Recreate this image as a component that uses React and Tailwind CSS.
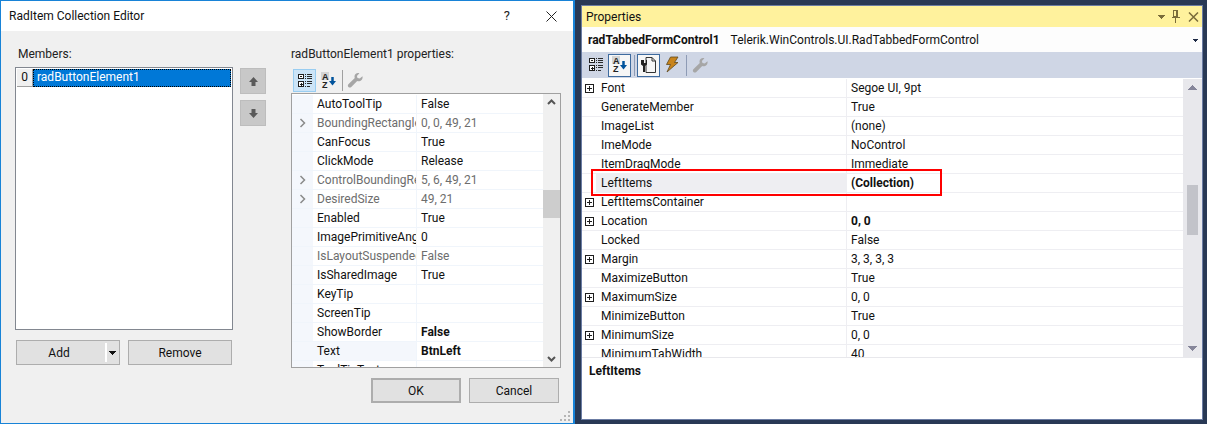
import React from "react";

const F = { fontFamily: 'Roboto, "Noto Sans", sans-serif' };

const leftRows = [
  ["AutoToolTip", "False"],
  ["BoundingRectangle", "0, 0, 49, 21", "d"],
  ["CanFocus", "True"],
  ["ClickMode", "Release"],
  ["ControlBoundingRectangle", "5, 6, 49, 21", "d"],
  ["DesiredSize", "49, 21", "d"],
  ["Enabled", "True"],
  ["ImagePrimitiveAngleTransform", "0"],
  ["IsLayoutSuspended", "False", "g"],
  ["IsSharedImage", "True"],
  ["KeyTip", ""],
  ["ScreenTip", ""],
  ["ShowBorder", "False", "b"],
  ["Text", "BtnLeft", "s"],
  ["ToolTipText", ""],
];

const rightRows = [
  ["Font", "Segoe UI, 9pt", "e"],
  ["GenerateMember", "True"],
  ["ImageList", "(none)"],
  ["ImeMode", "NoControl"],
  ["ItemDragMode", "Immediate"],
  ["LeftItems", "(Collection)", "sb"],
  ["LeftItemsContainer", "", "e"],
  ["Location", "0, 0", "eb"],
  ["Locked", "False"],
  ["Margin", "3, 3, 3, 3", "e"],
  ["MaximizeButton", "True"],
  ["MaximumSize", "0, 0", "e"],
  ["MinimizeButton", "True"],
  ["MinimumSize", "0, 0", "e"],
  ["MinimumTabWidth", "40"],
];

function CatIcon() {
  const c = "#1e1e1e";
  return (
    <svg width="16" height="16" viewBox="0 0 16 16" shapeRendering="crispEdges">
      <rect x="1.500" y="1.500" width="5" height="4" fill="#fff" stroke={c} />
      <rect x="1.500" y="8.500" width="5" height="5" fill="#fff" stroke={c} />
      <path d="M3 3.500h2M3 11h3M4.500 9.500v3" stroke={c} />
      <path d="M8 1.500h1M10 1.500h5M8 3.500h1M10 3.500h5M8 5.500h1M10 5.500h5M8 8.500h1M10 8.500h5M8 10.500h1M10 10.500h5M8 13.500h1M10 13.500h3" stroke="#2a2a2a" />
    </svg>
  );
}

function AzIcon() {
  return (
    <svg width="18" height="18" viewBox="0 0 18 18">
      <rect x="1" y="0" width="8" height="8" fill="#d4d4d4" />
      <text x="2" y="7.600" fontSize="9" fontWeight="700" fill="#222" fontFamily="Liberation Sans">A</text>
      <text x="2" y="16" fontSize="9" fontWeight="700" fill="#222" fontFamily="Liberation Sans">Z</text>
      <path d="M12.500 5v5" stroke="#00539c" strokeWidth="2.500" />
      <path d="M9 9h7L12.500 13.500z" fill="#00539c" />
    </svg>
  );
}

function Wrench() {
  return (
    <svg width="17" height="17" viewBox="0 0 17 17">
      <path d="M15.500 4.200l-2.800 2.400-2.200-.5-.6-2.100L12.400 1.200C10 .4 7.600 1.800 7.500 4.400c0 .7.1 1.200.3 1.700L1.600 12c-1 1-.9 2.200-.2 3 .8.8 2 .8 2.900-.1L10.200 9c2.800.8 6-1.200 5.300-4.800z" fill="#a6a6a6" />
    </svg>
  );
}

function PageIcon() {
  return (
    <svg width="18" height="18" viewBox="0 0 18 18">
      <path d="M6 1.500h6l3.500 3.500v11.500H6z" fill="#f6f6f6" stroke="#333" />
      <path d="M12 1.500V5h3.500" fill="none" stroke="#333" />
      <path d="M1 4h3v3h2V4h1v4.500L5 10v6H3v-6L1 8.500z" fill="#222" />
    </svg>
  );
}

function Bolt() {
  return (
    <svg width="18" height="18" viewBox="0 0 18 18">
      <path d="M6.500 1H14L10.500 6.500H14L3 16 6.500 8.500H2.500z" fill="#c8841c" stroke="#5f4a20" strokeWidth=".8" />
    </svg>
  );
}

function Tri({ up, color, w = 9 }) {
  return (
    <svg width={w} height={Math.ceil(w / 2)} viewBox="0 0 10 5" shapeRendering="crispEdges">
      <path d={up ? "M5 0L10 5H0z" : "M0 0h10L5 5z"} fill={color} />
    </svg>
  );
}

function Plus() {
  return (
    <svg width="9" height="9" viewBox="0 0 9 9" shapeRendering="crispEdges">
      <rect x=".5" y=".5" width="8" height="8" fill="#fff" stroke="#1e1e1e" />
      <path d="M2 4.500h5M4.500 2v5" stroke="#1e1e1e" />
    </svg>
  );
}

function Chev({ up }) {
  return (
    <svg width="9" height="6" viewBox="0 0 9 6">
      <path d={up ? "M1 5l3.500-3.500L8 5" : "M1 1l3.500 3.500L8 1"} fill="none" stroke="#555" strokeWidth="2" />
    </svg>
  );
}

function MoveBtn({ up }) {
  return (
    <div className="w-[26px] h-[26px] bg-[#c8c8c8] border border-[#bdbdbd] flex items-center justify-center">
      <svg width="11" height="11" viewBox="0 0 11 11">
        <path d={up ? "M5.500 1L10 6H7.500v4h-4V6H1z" : "M3.500 1h4v4H10L5.500 10 1 5h2.500z"} fill="#5a5a5a" />
      </svg>
    </div>
  );
}

function Btn({ children, w, className = "" }) {
  return (
    <div className={`h-[25px] border border-[#adadad] bg-[#e1e1e1] flex items-center justify-center text-[12px] text-[#111] ${className}`} style={{ width: w }}>
      {children}
    </div>
  );
}

function LeftDialog() {
  return (
    <div className="w-[575px] h-[424px] shrink-0 border border-[#1883d7] border-r-2 flex flex-col bg-[#f0f0f0]">
      <div className="h-[30px] shrink-0 bg-white flex items-center">
        <span className="ml-[8px] text-[12px] text-[#111]">RadItem Collection Editor</span>
        <span className="ml-auto mr-[36px] text-[13px] text-[#222]">?</span>
        <svg width="11" height="11" viewBox="0 0 11 11" className="mr-[16px]">
          <path d="M.5.500l10 10M10.500.500l-10 10" stroke="#222" strokeWidth="1" />
        </svg>
      </div>
      <div className="flex-1 flex relative">
        <div className="w-[218px] ml-[14px] mt-[14px] shrink-0 flex flex-col">
          <div className="h-[22px] pl-[3px] pt-[1px] text-[12px] leading-[17px] text-[#222]">Members:</div>
          <div className="h-[263px] border border-[#828790] bg-white p-[1px]">
            <div className="flex h-[18px]">
              <div className="w-[16px] h-[18px] bg-[#f0f0f0] border-r border-b border-[#a0a0a0] text-[12px] leading-[17px] text-center text-[#111]">0</div>
              <div className="flex-1 h-[18px] bg-[#0078d7] outline-1 outline-dotted -outline-offset-1 outline-black text-white text-[12px] leading-[17px] pl-[4px]">radButtonElement1</div>
            </div>
          </div>
          <div className="flex mt-[10px] ml-[1px] gap-[8px]">
            <Btn w={104} className="relative">
              <span className="mr-[18px]">Add</span>
              <div className="absolute right-[12px] top-[2px] bottom-[2px] w-[2px] bg-white" />
              <div className="absolute right-[3px] top-[10px]"><Tri color="#111" w={7} /></div>
            </Btn>
            <Btn w={104}>Remove</Btn>
          </div>
        </div>
        <div className="ml-[7px] mt-[37px] w-[26px] flex flex-col gap-[6px] shrink-0">
          <MoveBtn up />
          <MoveBtn />
        </div>
        <div className="ml-[25px] mt-[14px] w-[270px] shrink-0 flex flex-col">
          <div className="h-[23px] pt-[1px] text-[12px] leading-[17px] text-[#222]">radButtonElement1 properties:</div>
          <div className="h-[25px] flex items-center gap-[3px] pl-[2px]">
            <div className="w-[23px] h-[23px] bg-[#cce4f7] border border-[#99cdf1] flex items-center justify-center"><CatIcon /></div>
            <div className="w-[20px] h-[23px] flex items-center justify-center"><AzIcon /></div>
            <div className="w-px h-[21px] bg-[#a0a0a0]" />
            <div className="ml-[1px] h-[23px] flex items-center"><Wrench /></div>
          </div>
          <div className="h-[275px] border border-[#a0a0a0] bg-white flex overflow-hidden">
            <div className="w-[251px] shrink-0 flex flex-col overflow-hidden pt-[1px]">
              {leftRows.map(([n, v, k]) => (
                <div key={n} className="h-[19px] shrink-0 flex border-b border-[#f0f5fb] text-[12px] leading-[18px]">
                  <div className="w-[21px] shrink-0 bg-[#f4f7fc] flex items-center justify-center">
                    {k === "d" && <svg width="7" height="10" viewBox="0 0 7 10"><path d="M1.500 1l4 4-4 4" fill="none" stroke="#8a8a8a" strokeWidth="1.500" /></svg>}
                  </div>
                  <div className={`w-[104px] shrink-0 pl-[4px] overflow-hidden whitespace-nowrap border-r border-[#f0f5fb] ${k === "d" || k === "g" ? "text-[#6d6d6d]" : "text-[#111]"} ${k === "s" ? "bg-[#f4f7fc]" : ""}`}>{n}</div>
                  <div className={`flex-1 pl-[4px] whitespace-nowrap ${k === "d" || k === "g" ? "text-[#6d6d6d]" : "text-[#111]"} ${k === "b" || k === "s" ? "font-bold" : ""}`}>{v}</div>
                </div>
              ))}
            </div>
            <div className="flex-1 bg-[#f0f0f0] flex flex-col items-center py-[5px]">
              <Chev up />
              <div className="w-full h-[28px] bg-[#cdcdcd] mt-[85px]" />
              <div className="mt-auto"><Chev /></div>
            </div>
          </div>
          <div className="flex gap-[8px] mt-[10px] ml-[80px]">
            <Btn w={90} className="border-2 border-[#0078d7]">OK</Btn>
            <Btn w={90}>Cancel</Btn>
          </div>
        </div>
        <svg width="11" height="11" viewBox="0 0 11 11" className="absolute right-[2px] bottom-[2px]">
          <path d="M8 1h2v2H8zM4 5h2v2H4zM8 5h2v2H8zM0 9h2v2H0zM4 9h2v2H4zM8 9h2v2H8z" fill="#b5b5b5" />
        </svg>
      </div>
    </div>
  );
}

function RightPanel() {
  return (
    <div className="w-[622px] h-[415px] mt-[5px] ml-[6px] shrink-0 border border-[#6b7ca3] bg-white flex flex-col">
      <div className="h-[21px] shrink-0 bg-[#fff29d] flex items-center pl-[4px] text-[12px] text-[#111]">
        <span>Properties</span>
        <div className="ml-auto flex items-center mr-[3px] gap-[6px]">
          <Tri color="#7a6c3a" w={8} />
          <svg width="9" height="13" viewBox="0 0 9 13" shapeRendering="crispEdges">
            <path d="M2.500.500h4v6h-4zM.5 7.500h8M4.500 8v5M5.500 1v5" fill="none" stroke="#7a6c3a" />
          </svg>
          <svg width="11" height="10" viewBox="0 0 11 10" className="ml-[2px]">
            <path d="M1 .5l9 9M10 .5l-9 9" stroke="#7a6c3a" strokeWidth="1.500" />
          </svg>
        </div>
      </div>
      <div className="h-[25px] shrink-0 bg-[#fdfdfd] flex items-center pl-[6px] text-[12px] text-[#111]">
        <span className="font-bold">radTabbedFormControl1</span>
        <span className="ml-[11px]">Telerik.WinControls.UI.RadTabbedFormControl</span>
        <div className="ml-auto mr-[4px] mt-[2px]"><Tri color="#1e2a45" w={5} /></div>
      </div>
      <div className="h-[26px] shrink-0 bg-[#cfd6e5] flex items-center pl-[2px]">
        <div className="w-[23px] h-[23px] flex items-center justify-center"><CatIcon /></div>
        <div className="w-[23px] h-[23px] ml-[1px] bg-[#f6f6f6] border border-[#3e6b9f] flex items-center justify-center"><AzIcon /></div>
        <div className="w-px h-[21px] bg-[#8e9bb5] ml-[3px]" />
        <div className="w-[23px] h-[23px] ml-[2px] bg-[#f6f6f6] border border-[#3e6b9f] flex items-center justify-center"><PageIcon /></div>
        <div className="w-[23px] h-[23px] ml-[1px] flex items-center justify-center"><Bolt /></div>
        <div className="w-px h-[21px] bg-[#8e9bb5] ml-[2px]" />
        <div className="ml-[5px] flex items-center"><Wrench /></div>
      </div>
      <div className="h-[279px] shrink-0 mt-[1px] flex overflow-hidden relative border-b border-[#e8e8ec]">
        <div className="w-[601px] shrink-0 flex flex-col overflow-hidden">
          {rightRows.map(([n, v, k]) => (
            <div key={n} className="h-[19px] shrink-0 flex border-b border-[#eeeef2] text-[12px] leading-[18px]">
              <div className="w-[14px] shrink-0 bg-white flex items-center justify-center pl-[1px]">
                {k && k[0] === "e" && <Plus />}
              </div>
              <div className={`w-[251px] shrink-0 pl-[5px] border-r border-[#eeeef2] text-[#111] ${k === "sb" ? "bg-[#eeeef2]" : ""}`}>{n}</div>
              <div className={`flex-1 pl-[4px] text-[#111] ${k === "sb" || k === "eb" ? "font-bold" : ""}`}>{v}</div>
            </div>
          ))}
        </div>
        <div className="flex-1 bg-[#e8e8ec] flex flex-col items-center py-[6px]">
          <Tri up color="#86869a" />
          <div className="w-[11px] h-[50px] bg-[#c2c3c9] mt-[95px]" />
          <div className="mt-auto"><Tri color="#86869a" /></div>
        </div>
        <div className="absolute left-[9px] top-[90px] w-[351px] h-[27px] border-2 border-[#ff0000]" />
      </div>
      <div className="flex-1 pl-[7px] pt-[5px] text-[12px] leading-[17px] font-bold text-[#111]">LeftItems</div>
    </div>
  );
}

export default function App() {
  return (
    <div className="w-[1207px] h-[424px] bg-[#293955] flex overflow-hidden" style={F}>
      <LeftDialog />
      <RightPanel />
    </div>
  );
}
